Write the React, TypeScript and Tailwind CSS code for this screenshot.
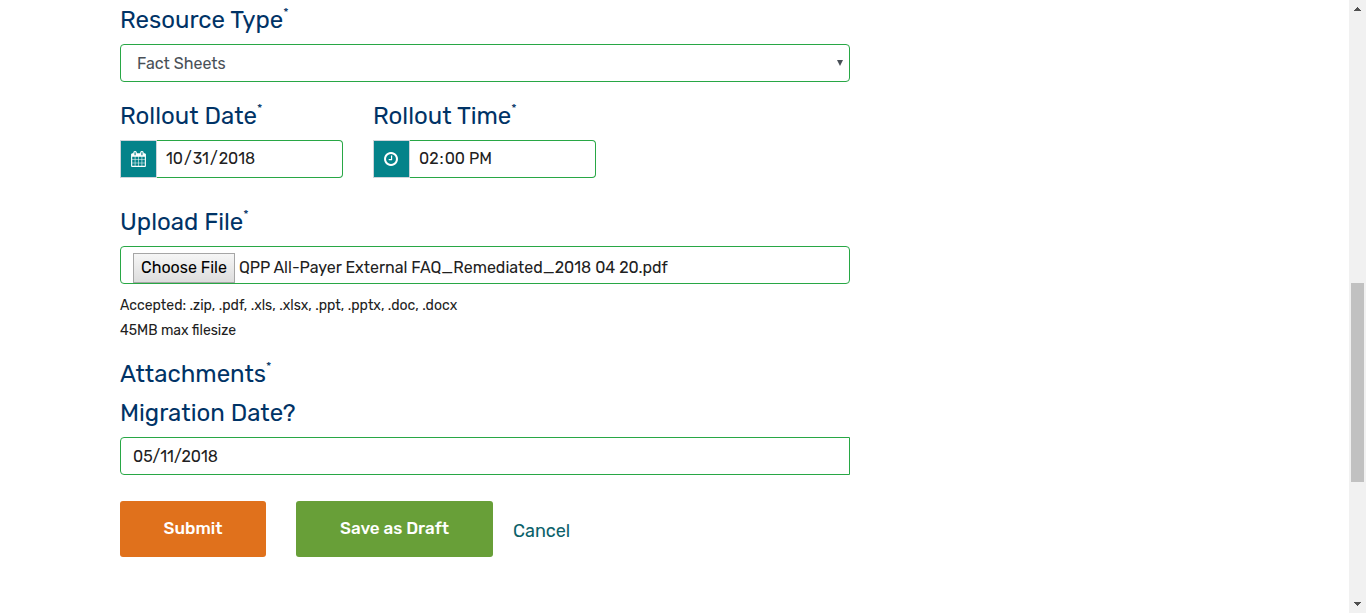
import { useState } from "react";
import type { ReactNode } from "react";

const fieldBox =
  "h-[38px] w-full rounded-l border border-[#28a745] bg-white px-3 text-base text-[#212121] outline-none";

function FieldLabel({ htmlFor, required, children }: { htmlFor: string; required?: boolean; children: ReactNode }) {
  return (
    <label htmlFor={htmlFor} className="flex h-8 items-center text-2xl leading-[30px] text-[#003366]">
      <span className="pb-px">{children}</span>
      {required && <span className="self-start text-xs leading-4">*</span>}
    </label>
  );
}

function CalendarIcon() {
  return (
    <svg viewBox="0 0 1664 1792" className="h-4 w-[15px] fill-white" aria-hidden="true">
      <path d="M128 1664h288v-288h-288v288zm352 0h320v-288h-320v288zm-352-352h288v-320h-288v320zm352 0h320v-320h-320v320zm-352-384h288v-288h-288v288zm736 736h320v-288h-320v288zm-384-736h320v-288h-320v288zm768 736h288v-288h-288v288zm-384-352h320v-320h-320v320zm-352-864v-288q0-13-9.500-22.500t-22.500-9.500h-64q-13 0-22.500 9.500t-9.500 22.500v288q0 13 9.500 22.500t22.500 9.500h64q13 0 22.500-9.500t9.500-22.500zm736 864h288v-320h-288v320zm-384-384h320v-288h-320v288zm384 0h288v-288h-288v288zm32-480v-288q0-13-9.500-22.500t-22.500-9.500h-64q-13 0-22.500 9.500t-9.500 22.500v288q0 13 9.500 22.500t22.500 9.500h64q13 0 22.500-9.500t9.500-22.500zm384-64v1280q0 52-38 90t-90 38h-1408q-52 0-90-38t-38-90v-1280q0-52 38-90t90-38h128v-96q0-66 47-113t113-47h64q66 0 113 47t47 113v96h384v-96q0-66 47-113t113-47h64q66 0 113 47t47 113v96h128q52 0 90 38t38 90z" />
    </svg>
  );
}

function ClockIcon() {
  return (
    <svg viewBox="0 0 1536 1536" className="h-3.5 w-3.5 fill-white" aria-hidden="true">
      <path d="M896 416v448q0 14-9 23t-23 9h-320q-14 0-23-9t-9-23v-64q0-14 9-23t23-9h224v-352q0-14 9-23t23-9h64q14 0 23 9t9 23zm416 352q0-148-73-273t-198-198-273-73-273 73-198 198-73 273 73 273 198 198 273 73 273-73 198-198 73-273zm224 0q0 209-103 385.500t-279.500 279.500-385.500 103-385.500-103-279.500-279.500-103-385.500 103-385.500 279.500-279.500 385.500-103 385.500 103 279.500 279.500 103 385.500z" />
    </svg>
  );
}

interface IconFieldProps {
  id: string;
  type: "date" | "time";
  label: string;
  value: string;
  icon: ReactNode;
}

function IconField({ id, type, label, value, icon }: IconFieldProps) {
  return (
    <div className="w-[223px]">
      <FieldLabel htmlFor={id} required>{label}</FieldLabel>
      <div className="mt-2 flex h-[38px]">
        <span className="flex w-[37px] shrink-0 items-center justify-center border border-[#ced4da] bg-[#04838a] pr-px">
          {icon}
        </span>
        <input
          id={id}
          type={type}
          defaultValue={value}
          className="min-w-0 flex-1 rounded-r border border-l-0 border-[#28a745] px-2 text-base text-[#212121] outline-none [&::-webkit-calendar-picker-indicator]:hidden"
        />
      </div>
    </div>
  );
}

function Scrollbar() {
  return (
    <div className="flex w-[17px] shrink-0 flex-col items-center bg-[#f1f1f1]" aria-hidden="true">
      <svg viewBox="0 0 17 17" className="h-[17px] w-[17px] fill-[#505050]">
        <path d="M5 11h7v-1h-1v-1h-1v-1h-1v-1h-1v1h-1v1h-1v1h-1z" />
      </svg>
      <div className="grow-[266]" />
      <div className="w-[13px] grow-[199] bg-[#c1c1c1]" />
      <div className="grow-[114]" />
      <svg viewBox="0 0 17 17" className="h-[17px] w-[17px] fill-[#505050]">
        <path d="M5 6h7v1h-1v1h-1v1h-1v1h-1v-1h-1v-1h-1v-1h-1z" />
      </svg>
    </div>
  );
}

export default function App() {
  const [fileName, setFileName] = useState("QPP All-Payer External FAQ_Remediated_2018 04 20.pdf");

  return (
    <div className="flex min-h-screen bg-white font-['Rubik','Inter','Roboto',sans-serif] text-[#212121]">
      <main className="min-w-0 flex-1 px-[120px] pt-1">
        <form className="max-w-[730px]" onSubmit={(e) => e.preventDefault()}>
          <FieldLabel htmlFor="resource-type" required>Resource Type</FieldLabel>
          <div className="mt-2 grid items-center">
            <select
              id="resource-type"
              defaultValue="Fact Sheets"
              className="col-start-1 row-start-1 h-[38px] w-full appearance-none rounded border border-[#28a745] bg-white px-4 pt-0.5 text-base text-[#495057] outline-none"
            >
              <option>Fact Sheets</option>
            </select>
            <svg viewBox="0 0 6 6" className="pointer-events-none col-start-1 row-start-1 mr-[7px] h-1.5 w-1.5 justify-self-end fill-[#495057]" aria-hidden="true">
              <path d="M0 0h6L3 6z" />
            </svg>
          </div>

          <div className="mt-[18px] flex flex-wrap gap-[30px]">
            <IconField id="rollout-date" type="date" label="Rollout Date" value="2018-10-31" icon={<CalendarIcon />} />
            <IconField id="rollout-time" type="time" label="Rollout Time" value="14:00" icon={<ClockIcon />} />
          </div>

          <div className="mt-7">
            <FieldLabel htmlFor="upload-file" required>Upload File</FieldLabel>
            <label
              htmlFor="upload-file"
              className="mt-2 flex h-[38px] items-end gap-1 rounded border border-[#28a745] px-3 text-base"
            >
              <span className="flex h-[30px] shrink-0 items-center border border-[#a6a6a6] bg-linear-to-b from-[#f6f6f6] to-[#dddddd] px-[7px] text-black">
                Choose File
              </span>
              <span className="flex h-[30px] items-center truncate">{fileName}</span>
              <input
                id="upload-file"
                type="file"
                className="sr-only"
                onChange={(e) => setFileName(e.target.files?.[0]?.name ?? "No file chosen")}
              />
            </label>
            <div className="mt-[9px] text-sm leading-[25px]">
              <p>Accepted: .zip, .pdf, .xls, .xlsx, .ppt, .pptx, .doc, .docx</p>
              <p>45MB max filesize</p>
            </div>
          </div>

          <div className="mt-[15px] flex flex-col gap-[7px]">
            <FieldLabel htmlFor="upload-file" required>Attachments</FieldLabel>
            <FieldLabel htmlFor="migration-date">Migration Date?</FieldLabel>
          </div>
          <input id="migration-date" type="text" defaultValue="05/11/2018" className={`mt-2 ${fieldBox}`} />

          <div className="mt-[26px] flex flex-wrap items-center">
            <button type="submit" className="h-14 w-[146px] rounded-[3px] bg-[#e0711c] text-[17px] font-medium text-white">
              Submit
            </button>
            <button type="button" className="ml-[30px] h-14 w-[197px] rounded-[3px] bg-[#689f38] text-[17px] font-medium text-white">
              Save as Draft
            </button>
            <a href="#cancel" className="ml-5 pt-1 text-lg text-[#0b6169]">Cancel</a>
          </div>
        </form>
      </main>
      <Scrollbar />
    </div>
  );
}
